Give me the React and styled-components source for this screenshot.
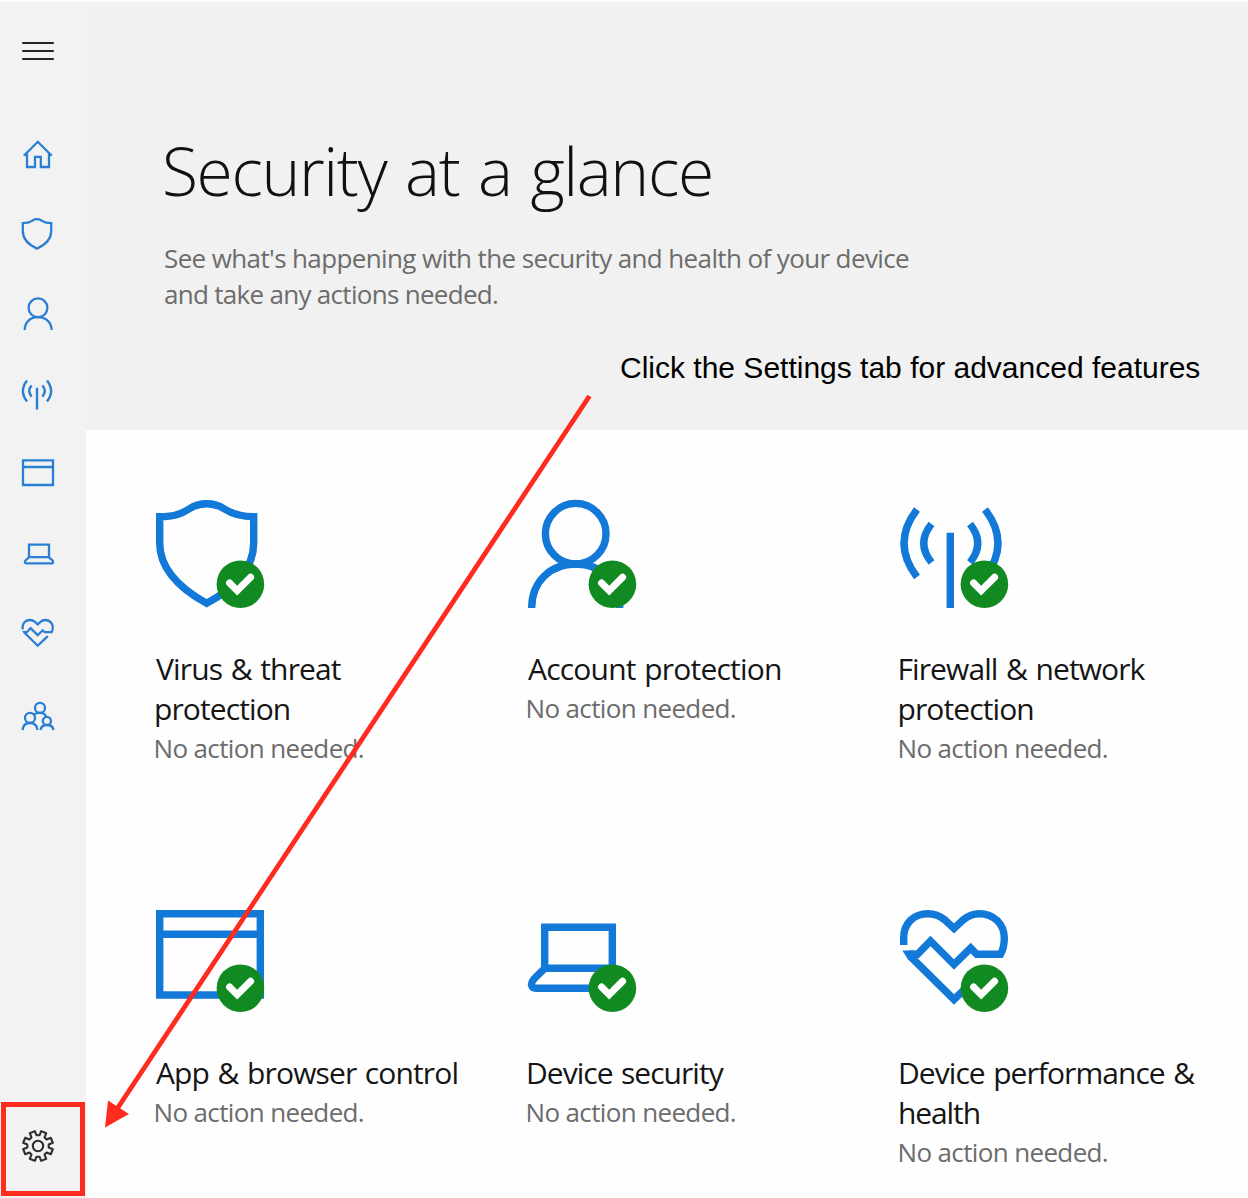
import React from 'react';
import styled, { createGlobalStyle } from 'styled-components';

const BLUE = '#1279d8';
const NAV_BLUE = '#2a7fd4';
const RED = '#ff2b1e';

const GlobalStyle = createGlobalStyle`
  * { box-sizing: border-box; }
  html, body { margin: 0; padding: 0; background: #fefefe; overflow: hidden; }
`;

const Window = styled.div`
  position: relative;
  display: flex;
  width: 1248px;
  height: 1198px;
  border-top: 2px solid #fdfdfd;
  background: #fefefe;
  overflow: hidden;
  font-family: 'Open Sans', 'Noto Sans', sans-serif;
`;

const Sidebar = styled.nav`
  display: flex;
  flex-direction: column;
  flex: none;
  width: 86px;
  height: 1196px;
  background: #f2f2f2;
`;

const MenuButton = styled.div`
  display: flex;
  flex-direction: column;
  flex: none;
  gap: 6px;
  padding: 40px 0 0 22px;
  height: 113px;
`;

const MenuBar = styled.span`
  width: 32px;
  height: 2px;
  border-radius: 1px;
  background: #222;
`;

const NavItem = styled.div`
  display: flex;
  align-items: center;
  padding-left: 18px;
  height: 80px;
`;

const NavIcon = styled.svg`
  width: 40px;
  height: 40px;
  fill: none;
  stroke: ${NAV_BLUE};
  stroke-width: 2.3;
`;

const SettingsTab = styled.div`
  display: flex;
  align-items: center;
  margin: auto 0 2px 1px;
  padding-left: 12px;
  width: 84px;
  height: 94px;
  border: 5px solid ${RED};
`;

const GearIcon = styled.svg`
  width: 40px;
  height: 40px;
  margin-top: -6px;
  fill: none;
  stroke: #2e2e2e;
  stroke-width: 2.1;
`;

const Main = styled.main`
  display: flex;
  flex-direction: column;
  flex: 1;
`;

const Header = styled.header`
  flex: none;
  height: 428px;
  padding: 123px 0 0 78px;
  background: #f1f1f1;
`;

const Heading = styled.h1`
  margin: 0 0 0 -2px;
  height: 90px;
  font-size: 66px;
  line-height: 90px;
  font-weight: 300;
  letter-spacing: -1.4px;
  word-spacing: 3px;
  color: #111;
  white-space: nowrap;
`;

const Intro = styled.p`
  display: flex;
  flex-direction: column;
  margin: 25px 0 0 0;
  font-size: 26px;
  line-height: 36px;
  color: #6c6c6c;
  white-space: nowrap;
`;

const IntroLine = styled.span`
  letter-spacing: ${(p) => p.$spacing}px;
`;

const Callout = styled.div`
  margin: 36px 0 0 456px;
  font-family: 'Liberation Sans', Arial, sans-serif;
  font-size: 30px;
  line-height: 40px;
  color: #000;
  white-space: nowrap;
`;

const Grid = styled.section`
  display: grid;
  grid-template-columns: repeat(3, 372px);
  grid-auto-rows: 404px;
  padding: 69px 0 0 68px;
`;

const Card = styled.article`
  display: flex;
  flex-direction: column;
`;

const CardIcon = styled.svg`
  flex: none;
  width: 110px;
  height: 110px;
  margin: 0 0 40px 1px;
  fill: none;
  stroke: ${BLUE};
  stroke-width: 7.4;
`;

const CardTitle = styled.h2`
  display: flex;
  flex-direction: column;
  margin: 0;
  font-size: 30px;
  line-height: 40px;
  font-weight: 400;
  color: #151515;
  white-space: nowrap;
`;

const TitleLine = styled.span`
  letter-spacing: ${(p) => p.$spacing}px;
  word-spacing: 1.6px;
  text-indent: ${(p) => p.$indent || 0}px;
`;

const Status = styled.p`
  margin: 0;
  font-size: 26px;
  line-height: 38px;
  letter-spacing: -0.64px;
  text-indent: -0.5px;
  color: #6c6c6c;
  white-space: nowrap;
`;

const Arrow = styled.svg`
  position: absolute;
  left: 0;
  top: -2px;
  width: 1248px;
  height: 1198px;
  pointer-events: none;
`;

const HeartPaths = ({ color }) => (
  <>
    <path d="M4.7 42 V35 C4.7 20 15 10.7 29 10.7 C36 10.7 41 13 46 17 L55 25.5 L64 17 C69 13 73 10.7 80 10.7 C95 10.7 105.3 21 105.3 35 C105.3 42 104 47 101.5 51.3 H77.7 L71.7 45 L55 61.5 L31.5 38 L18.5 51.3 H10" />
    <path d="M3.3 47.6 H16 V57 L9.4 57 Z" fill={color} stroke="none" />
    <path d="M11 53 L55 96.5 L88.5 64.5" />
  </>
);

const Badge = () => (
  <g stroke="none">
    <circle cx="85.4" cy="85.2" r="23.8" fill="#128a22" />
    <path d="M74.6 84 L82.2 91.6 L95.6 78.2" fill="none" stroke="#fff" strokeWidth="7" strokeLinecap="round" />
  </g>
);

const navIcons = [
  <path key="home" d="M5.8 20.8 L19.8 6.8 L33.8 20.8 M9 18.5 V32 H17 V21.8 H22.8 V32 H31 V18.5" />,
  <path key="shield" d="M4.8 8.2 C11 8.2 12.5 6.8 14.5 5.5 C16 4.6 17.5 4.2 19 4.2 C20.5 4.2 22 4.6 23.5 5.5 C25.5 6.8 27 8.2 33.2 8.2 V16 C33.2 23 28 29.5 19 33.6 C10 29.5 4.8 23 4.8 16 Z" />,
  <g key="person"><circle cx="20" cy="12.8" r="9.4" /><path d="M6.7 35 C6.7 27 12.5 22.2 20 22.2 C27.5 22.2 33.6 27 33.6 35" /></g>,
  <path key="antenna" d="M19 12.7 V34.5 M9 5.5 Q0.8 16 9 26.5 M29 5.5 Q37.2 16 29 26.5 M13.6 10.5 Q8.8 16 13.6 21.7 M24.4 10.5 Q29.2 16 24.4 21.7" strokeWidth="2.4" />,
  <path key="window" d="M5 5.3 H35 V30 H5 Z M5 12 H35" />,
  <path key="laptop" d="M11 9.6 H31 V22.2 H11 Z M11 22.2 L7.3 25.8 Q6 28.3 8.5 28.3 H33.5 Q36 28.3 34.7 25.8 L31 22.2" />,
  <g key="heart" transform="translate(3.2 1.8) scale(.3)" strokeWidth="7.6"><HeartPaths color={NAV_BLUE} /></g>,
  <g key="people">
    <circle cx="22" cy="12.9" r="5" /><circle cx="12" cy="22.9" r="5" /><circle cx="28.9" cy="25.9" r="4.1" />
    <path d="M4.5 35 C5 30.5 8 28 12 28 C16 28 19 30.5 19.5 35 M22.6 35 C23 31.5 25.5 30 28.9 30 C32.5 30 35 31.5 35.5 35 M15.7 19.6 C17.5 18.3 19.5 17.9 22 17.9 C25 17.9 27.5 19.5 28.3 21.8" />
  </g>,
];

const cards = [
  {
    lines: [['Virus & threat', -0.85, 2], ['protection', -0.9]],
    icon: <path d="M4.7 17.7 C20 17.7 27 14.5 34 10 C40 6 45 4.7 51.7 4.7 C58.5 4.7 63.5 6 69.5 10 C76.5 14.5 84 17.7 98.7 17.7 V44 C98.7 68 81.5 88 51.7 104.3 C22 88 4.7 68 4.7 44 Z" />,
  },
  {
    lines: [['Account protection', -0.8, 2]],
    icon: <><circle cx="48.7" cy="34.7" r="30.3" /><path d="M4.7 109 C4.7 82 24 65 48.7 65 C73.5 65 92.7 82 92.7 109" /></>,
  },
  {
    lines: [['Firewall & network', -0.9, -0.5], ['protection', -0.9, -0.5]],
    icon: <path d="M51.3 33.7 V109 M18 10.5 Q-8 44.3 18 78 M86 10.5 Q112 44.3 86 78 M32.5 25 Q17 44.3 32.5 63.5 M71 25 Q86.5 44.3 71 63.5" />,
  },
  {
    lines: [['App & browser control', -0.87, 2]],
    icon: <path d="M4.7 10.7 H105.3 V92 H4.7 Z M4.7 31.3 H105.3" />,
  },
  {
    lines: [['Device security', -0.97]],
    icon: <path d="M17.7 24.3 H85.3 V65.3 H17.7 Z M17.7 65.3 L7 76 C3 80.5 4 85.3 9 85.3 H95" />,
  },
  {
    lines: [['Device performance &', -0.94], ['health', -1.1]],
    icon: <HeartPaths color={BLUE} />,
  },
];

const gearPath = (() => {
  const pts = [];
  for (let i = 0; i < 8; i++) {
    const c = (i * 45 + 22.5) * Math.PI / 180;
    [[-0.26, 10.8], [-0.18, 15.2], [0.18, 15.2], [0.26, 10.8]].forEach(([a, r]) => {
      pts.push(`${(20 + r * Math.cos(c + a)).toFixed(2)} ${(20 + r * Math.sin(c + a)).toFixed(2)}`);
    });
  }
  return `M${pts.join(' L')} Z`;
})();

export default function App() {
  return (
    <>
      <GlobalStyle />
      <Window>
        <Sidebar>
          <MenuButton><MenuBar /><MenuBar /><MenuBar /></MenuButton>
          {navIcons.map((icon) => (
            <NavItem key={icon.key}><NavIcon viewBox="0 0 40 40">{icon}</NavIcon></NavItem>
          ))}
          <SettingsTab>
            <GearIcon viewBox="0 0 40 40">
              <path d={gearPath} strokeLinejoin="round" />
              <circle cx="20" cy="20" r="5.2" />
            </GearIcon>
          </SettingsTab>
        </Sidebar>
        <Main>
          <Header>
            <Heading>Security at a glance</Heading>
            <Intro>
              <IntroLine $spacing={-0.62}>See what's happening with the security and health of your device</IntroLine>
              <IntroLine $spacing={-0.7}>and take any actions needed.</IntroLine>
            </Intro>
            <Callout>Click the Settings tab for advanced features</Callout>
          </Header>
          <Grid>
            {cards.map(({ lines, icon }) => (
              <Card key={lines[0][0]}>
                <CardIcon viewBox="0 0 110 110">{icon}<Badge /></CardIcon>
                <CardTitle>
                  {lines.map(([text, spacing, indent]) => (
                    <TitleLine key={text} $spacing={spacing} $indent={indent}>{text}</TitleLine>
                  ))}
                </CardTitle>
                <Status>No action needed.</Status>
              </Card>
            ))}
          </Grid>
        </Main>
        <Arrow viewBox="0 0 1248 1198">
          <path d="M589.5 396 L117 1109" stroke={RED} strokeWidth="4.8" fill="none" />
          <path d="M105 1127.5 L108 1100.5 L129 1114 Z" fill={RED} />
        </Arrow>
      </Window>
    </>
  );
}
